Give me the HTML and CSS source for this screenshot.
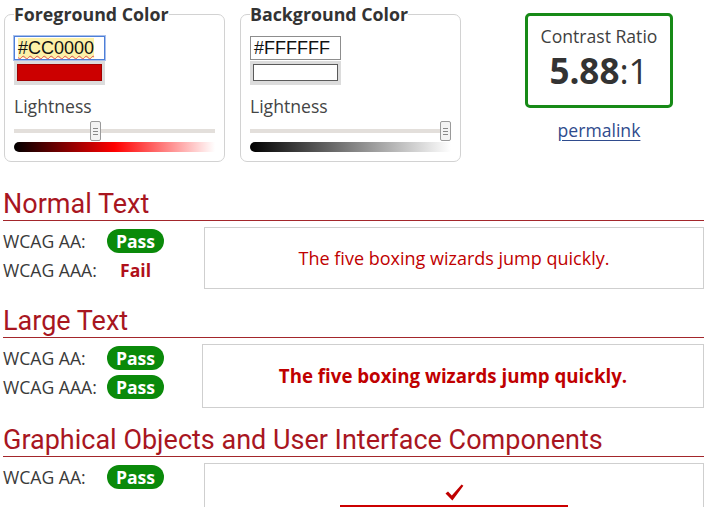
FILE: index.html
```html
<!DOCTYPE html>
<html lang="en">
<head>
<meta charset="utf-8">
<title>Contrast Checker</title>
<link rel="stylesheet" href="styles.css">
</head>
<body>
<div class="page">
  <div class="top">
    <fieldset class="picker picker-fg">
      <legend>Foreground Color</legend>
      <div class="hex hex-focus"><span class="hex-hl">#CC0000</span></div>
      <div class="swatch"><div class="swatch-inner swatch-red"></div></div>
      <div class="lbl">Lightness</div>
      <div class="slider">
        <div class="track"></div>
        <div class="thumb" style="--p:0.4"><i></i><i></i><i></i></div>
      </div>
      <div class="grad grad-red"></div>
    </fieldset>
    <fieldset class="picker picker-bg">
      <legend>Background Color</legend>
      <div class="hex"><span>#FFFFFF</span></div>
      <div class="swatch"><div class="swatch-inner swatch-white"></div></div>
      <div class="lbl">Lightness</div>
      <div class="slider">
        <div class="track"></div>
        <div class="thumb" style="--p:1"><i></i><i></i><i></i></div>
      </div>
      <div class="grad grad-gray"></div>
    </fieldset>
    <div class="result">
      <div class="ratio-box">
        <div class="ratio-title">Contrast Ratio</div>
        <div class="ratio-val"><b>5.88</b>:1</div>
      </div>
      <a class="permalink" href="#">permalink</a>
    </div>
  </div>

  <h2 class="sec-title">Normal Text</h2>
  <div class="sec">
    <div class="checks">
      <div class="row"><span class="lab">WCAG AA:</span><span class="status pass">Pass</span></div>
      <div class="row"><span class="lab">WCAG AAA:</span><span class="status fail">Fail</span></div>
    </div>
    <div class="sample sample-normal">The five boxing wizards jump quickly.</div>
  </div>

  <h2 class="sec-title">Large Text</h2>
  <div class="sec">
    <div class="checks">
      <div class="row"><span class="lab">WCAG AA:</span><span class="status pass">Pass</span></div>
      <div class="row"><span class="lab">WCAG AAA:</span><span class="status pass">Pass</span></div>
    </div>
    <div class="sample sample-large">The five boxing wizards jump quickly.</div>
  </div>

  <h2 class="sec-title">Graphical Objects and User Interface Components</h2>
  <div class="sec">
    <div class="checks">
      <div class="row"><span class="lab">WCAG AA:</span><span class="status pass">Pass</span></div>
    </div>
    <div class="sample sample-graph">
      <svg class="check" width="19" height="17" viewBox="0 0 19 17" aria-hidden="true">
        <path d="M0.5 9.5 L3 7.6 L6.8 11.6 L16.6 0.6 L18.4 1.8 L7.4 16.4 Z" fill="#c00000"/>
      </svg>
      <div class="ui-input"></div>
    </div>
  </div>
</div>
</body>
</html>
```

FILE: styles.css
```css
* { box-sizing: border-box; }
html, body { margin: 0; padding: 0; background: #fff; }
body {
  font-family: "Open Sans", "Liberation Sans", sans-serif;
  font-size: 17.6px;
  line-height: 24px;
  color: #3a3a3a;
  overflow: hidden;
}
.page { padding: 2px 1px 0 3px; width: 705px; }

.top { display: flex; align-items: flex-start; }

.picker {
  width: 221px;
  margin: 0;
  padding: 10px 9px 9px 9px;
  border: 1px solid #d2d2d2;
  border-radius: 7px;
  min-width: 0;
}
.picker-fg { margin-left: 1px; }
.picker-bg { margin-left: 15px; }
.picker legend {
  padding: 0;
  font-weight: 700;
  font-size: 17.8px;
  line-height: 24px;
  color: #333;
}
.hex {
  width: 91px;
  height: 24px;
  border: 1px solid #8d8d8d;
  font-family: "Liberation Sans", Arial, sans-serif;
  font-size: 18px;
  line-height: 20px;
  color: #111;
  padding: 1px 0 0 3px;
  background: #fff;
}
.hex-focus {
  border: 1px solid #4d7fd8;
  box-shadow: 0 0 0 1px #a9c0ec;
}
.hex-hl {
  background: #fdf1a8;
  text-decoration: underline wavy #e05050;
  text-decoration-thickness: 1px;
  text-underline-offset: 1px;
}
.swatch {
  width: 91px;
  height: 24px;
  margin-top: 1px;
  background: #dcdcdc;
  padding: 3px 3px 4px 3px;
}
.swatch-inner { height: 100%; }
.swatch-red { background: #cc0000; border: 1px solid #a10000; }
.swatch-white { background: #fff; border: 1px solid #5a5a5a; }

.lbl {
  margin-top: 9px;
  color: #444;
}
.slider {
  position: relative;
  height: 20px;
  margin-top: 3px;
}
.track {
  position: absolute;
  left: 0; right: 0; top: 8px;
  height: 4px;
  background: #e3dfdb;
}
.thumb {
  position: absolute;
  top: 0;
  left: calc(var(--p) * (100% - 11px));
  width: 11px;
  height: 20px;
  background: #f3f3f3;
  border: 1px solid #9a9a9a;
  border-radius: 2px;
  display: flex;
  flex-direction: column;
  align-items: center;
  justify-content: center;
  gap: 2px;
}
.thumb i {
  display: block;
  width: 5px;
  height: 1px;
  background: #888;
}
.grad {
  height: 10px;
  margin-top: 1px;
  border-radius: 5px 0 0 5px;
}
.grad-red { background: linear-gradient(to right, #000 0%, #ff0000 50%, #fff 100%); }
.grad-gray { background: linear-gradient(to right, #000 0%, #fff 100%); }

.result {
  margin-left: 64px;
  margin-top: 11px;
  width: 148px;
  display: flex;
  flex-direction: column;
  align-items: center;
}
.ratio-box {
  width: 148px;
  height: 95px;
  border: 3px solid #178a17;
  border-radius: 5px;
  text-align: center;
  padding-top: 8px;
}
.ratio-title { color: #3f3f3f; line-height: 24px; }
.ratio-val {
  font-size: 35px;
  line-height: 40px;
  margin-top: 3px;
  color: #333;
}
.ratio-val b { font-weight: 700; }
.permalink {
  margin-top: 10px;
  color: #2f4b8d;
  text-decoration: underline;
  text-underline-offset: 3px;
}

.sec-title {
  font-family: Roboto, "Liberation Sans", sans-serif;
  font-weight: 400;
  font-size: 27px;
  line-height: 30px;
  color: #a8161f;
  margin: 17px 0 0 0;
  padding-bottom: 1px;
  border-bottom: 1px solid #a3262b;
}
.top + .sec-title { margin-top: 27px; }

.sec {
  display: flex;
  align-items: flex-start;
  margin-top: 6px;
}
.checks {
  width: 201px;
  flex: none;
  display: flex;
  flex-direction: column;
  gap: 3px;
  padding-top: 1px;
}
.row {
  display: flex;
  align-items: center;
  height: 26px;
}
.lab { width: 104px; flex: none; color: #3a3a3a; }
.status {
  width: 57px;
  height: 24px;
  text-align: center;
  font-weight: 700;
  line-height: 24px;
}
.pass {
  background: #0a8a0a;
  color: #fff;
  border-radius: 12px;
}
.fail { color: #b0101a; }

.sample {
  flex: 1;
  border: 1px solid #cfcfcf;
  display: flex;
  align-items: center;
  justify-content: center;
  color: #c00000;
}
.sample-normal { height: 62px; font-size: 18px; }
.sample-large {
  height: 64px;
  font-weight: 700;
  font-size: 18.7px;
  margin-left: -2px;
}
.sample-graph {
  height: 80px;
  flex-direction: column;
  justify-content: flex-start;
  padding-top: 20px;
}
.check { display: block; }
.ui-input {
  margin-top: 4px;
  width: 228px;
  height: 30px;
  border: 2px solid #cc0000;
}
```
